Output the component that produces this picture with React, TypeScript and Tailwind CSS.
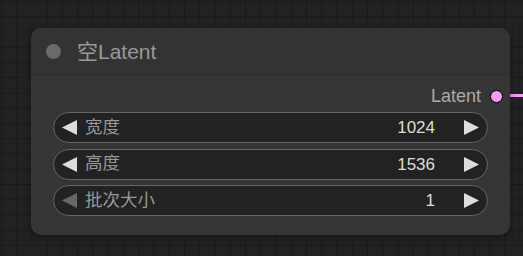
import React from "react";

const font = { fontFamily: '"Liberation Sans", Arial, "Noto Sans CJK SC", sans-serif' };

function Tri({ dir, color }: { dir: "l" | "r"; color: string }) {
  return (
    <svg width="15" height="15" viewBox="0 0 10 10" className="shrink-0">
      {dir === "l" ? (
        <polygon points="10,0 0,5 10,10" fill={color} />
      ) : (
        <polygon points="0,0 10,5 0,10" fill={color} />
      )}
    </svg>
  );
}

function Widget({ label, value, leftDisabled }: { label: string; value: string; leftDisabled?: boolean }) {
  return (
    <div className="h-[31px] rounded-full bg-[#222222] border border-[#666666] flex items-center pl-[8px] pr-[8px]">
      <Tri dir="l" color={leftDisabled ? "#666666" : "#dddddd"} />
      <span className="ml-[8px] text-[17.5px] text-[#999999] leading-none">{label}</span>
      <span className="flex-1" />
      <span className="text-[17px] text-[#dddddd] leading-none mr-[29px]">{value}</span>
      <Tri dir="r" color="#dddddd" />
    </div>
  );
}

export default function App() {
  return (
    <div
      className="relative w-[523px] h-[256px] overflow-hidden bg-[#222222] bg-[image:linear-gradient(to_right,#1a1a1a_1px,transparent_1px),linear-gradient(to_bottom,#1a1a1a_1px,transparent_1px)] bg-[size:15.25px_15.25px] bg-[position:1px_1px]"
      style={font}
    >
      {/* link */}
      <div className="absolute left-[500px] top-[93px] w-[30px] h-[5px] bg-[#f49cf4] border-y border-[#222]" />
      <div className="absolute left-[31px] top-[28px] w-[479px] h-[207px] rounded-[10px] bg-[#353535] shadow-[0_2px_6px_rgba(0,0,0,0.45)] flex flex-col">
        <div className="h-[47px] flex items-center border-b border-[#2c2c2c] rounded-t-[10px] bg-[#333333]">
          <div className="ml-[15px] w-[15px] h-[15px] rounded-full bg-[#6a6a6a]" />
          <span className="ml-[16px] text-[21px] text-[#999999] leading-none">空Latent</span>
        </div>
        <div className="h-[36px] flex items-center justify-end pr-[7px] pt-[6px]">
          <span className="text-[18px] text-[#aaaaaa] leading-none">Latent</span>
          <div className="ml-[9px] w-[13px] h-[13px] rounded-full bg-[#f49cf4] border border-black" />
        </div>
        <div className="flex flex-col gap-[5.5px] pl-[22px] pr-[22px] pt-[1px]">
          <Widget label="宽度" value="1024" />
          <Widget label="高度" value="1536" />
          <Widget label="批次大小" value="1" leftDisabled />
        </div>
      </div>
    </div>
  );
}
